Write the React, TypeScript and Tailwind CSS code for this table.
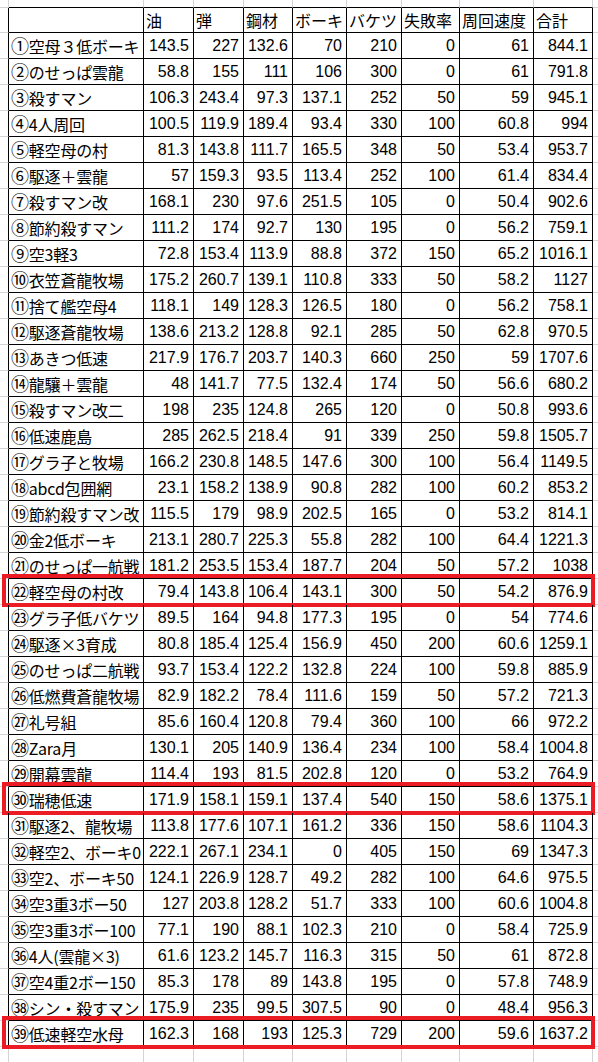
import React from "react";

type Row = [string, string, string, string, string, string, string, string, string];

const rows: Row[] = [
  ["①空母３低ボーキ", "143.5", "227", "132.6", "70", "210", "0", "61", "844.1"],
  ["②のせっぱ雲龍", "58.8", "155", "111", "106", "300", "0", "61", "791.8"],
  ["③殺すマン", "106.3", "243.4", "97.3", "137.1", "252", "50", "59", "945.1"],
  ["④4人周回", "100.5", "119.9", "189.4", "93.4", "330", "100", "60.8", "994"],
  ["⑤軽空母の村", "81.3", "143.8", "111.7", "165.5", "348", "50", "53.4", "953.7"],
  ["⑥駆逐＋雲龍", "57", "159.3", "93.5", "113.4", "252", "100", "61.4", "834.4"],
  ["⑦殺すマン改", "168.1", "230", "97.6", "251.5", "105", "0", "50.4", "902.6"],
  ["⑧節約殺すマン", "111.2", "174", "92.7", "130", "195", "0", "56.2", "759.1"],
  ["⑨空3軽3", "72.8", "153.4", "113.9", "88.8", "372", "150", "65.2", "1016.1"],
  ["⑩衣笠蒼龍牧場", "175.2", "260.7", "139.1", "110.8", "333", "50", "58.2", "1127"],
  ["⑪捨て艦空母4", "118.1", "149", "128.3", "126.5", "180", "0", "56.2", "758.1"],
  ["⑫駆逐蒼龍牧場", "138.6", "213.2", "128.8", "92.1", "285", "50", "62.8", "970.5"],
  ["⑬あきつ低速", "217.9", "176.7", "203.7", "140.3", "660", "250", "59", "1707.6"],
  ["⑭龍驤＋雲龍", "48", "141.7", "77.5", "132.4", "174", "50", "56.6", "680.2"],
  ["⑮殺すマン改二", "198", "235", "124.8", "265", "120", "0", "50.8", "993.6"],
  ["⑯低速鹿島", "285", "262.5", "218.4", "91", "339", "250", "59.8", "1505.7"],
  ["⑰グラ子と牧場", "166.2", "230.8", "148.5", "147.6", "300", "100", "56.4", "1149.5"],
  ["⑱abcd包囲網", "23.1", "158.2", "138.9", "90.8", "282", "100", "60.2", "853.2"],
  ["⑲節約殺すマン改", "115.5", "179", "98.9", "202.5", "165", "0", "53.2", "814.1"],
  ["⑳金2低ボーキ", "213.1", "280.7", "225.3", "55.8", "282", "100", "64.4", "1221.3"],
  ["㉑のせっぱ一航戦", "181.2", "253.5", "153.4", "187.7", "204", "50", "57.2", "1038"],
  ["㉒軽空母の村改", "79.4", "143.8", "106.4", "143.1", "300", "50", "54.2", "876.9"],
  ["㉓グラ子低バケツ", "89.5", "164", "94.8", "177.3", "195", "0", "54", "774.6"],
  ["㉔駆逐×3育成", "80.8", "185.4", "125.4", "156.9", "450", "200", "60.6", "1259.1"],
  ["㉕のせっぱ二航戦", "93.7", "153.4", "122.2", "132.8", "224", "100", "59.8", "885.9"],
  ["㉖低燃費蒼龍牧場", "82.9", "182.2", "78.4", "111.6", "159", "50", "57.2", "721.3"],
  ["㉗礼号組", "85.6", "160.4", "120.8", "79.4", "360", "100", "66", "972.2"],
  ["㉘Zara月", "130.1", "205", "140.9", "136.4", "234", "100", "58.4", "1004.8"],
  ["㉙開幕雲龍", "114.4", "193", "81.5", "202.8", "120", "0", "53.2", "764.9"],
  ["㉚瑞穂低速", "171.9", "158.1", "159.1", "137.4", "540", "150", "58.6", "1375.1"],
  ["㉛駆逐2、龍牧場", "113.8", "177.6", "107.1", "161.2", "336", "150", "58.6", "1104.3"],
  ["㉜軽空2、ボーキ0", "222.1", "267.1", "234.1", "0", "405", "150", "69", "1347.3"],
  ["㉝空2、ボーキ50", "124.1", "226.9", "128.7", "49.2", "282", "100", "64.6", "975.5"],
  ["㉞空3重3ボー50", "127", "203.8", "128.2", "51.7", "333", "100", "60.6", "1004.8"],
  ["㉟空3重3ボー100", "77.1", "190", "88.1", "102.3", "210", "0", "58.4", "725.9"],
  ["㊱4人(雲龍×3)", "61.6", "123.2", "145.7", "116.3", "315", "50", "61", "872.8"],
  ["㊲空4重2ボー150", "85.3", "178", "89", "143.8", "195", "0", "57.8", "748.9"],
  ["㊳シン・殺すマン", "175.9", "235", "99.5", "307.5", "90", "0", "48.4", "956.3"],
  ["㊴低速軽空水母", "162.3", "168", "193", "125.3", "729", "200", "59.6", "1637.2"],
];

const header = ["", "油", "弾", "鋼材", "ボーキ", "バケツ", "失敗率", "周回速度", "合計"];

// widths include the 1px right border
const cols = [
  "w-[135px]",
  "w-[50px]",
  "w-[50px]",
  "w-[49px]",
  "w-[54px]",
  "w-[55px]",
  "w-[58px]",
  "w-[74px]",
  "w-[59px]",
];

// rows that get the red box
const marked = [21, 29, 38];

const jp = "font-['Noto_Sans_CJK_JP',sans-serif]";
const num = "font-['Liberation_Sans','Noto_Sans_CJK_JP',sans-serif]";

const App = () => {
  return (
    <div className="w-[598px] h-[1062px] overflow-hidden bg-white text-black text-[16px]">
      {/* spreadsheet row above the table */}
      <div className="flex h-[8px]">
        <div className="w-[9px] shrink-0 border-r border-b border-[#d4d4d4]" />
        {cols.map((w, i) => (
          <div key={i} className={`${w} shrink-0 border-r border-r-[#d4d4d4] border-b border-b-black`} />
        ))}
        <div className="flex-1 border-b border-[#d4d4d4]" />
      </div>

      {/* header */}
      <div className="flex h-[25px] leading-[24px]">
        <div className="w-[9px] shrink-0 border-r border-r-black border-b border-b-[#d4d4d4]" />
        {header.map((h, i) => (
          <div
            key={i}
            className={`${cols[i]} shrink-0 border-r border-b border-black pl-[2px] whitespace-nowrap overflow-hidden ${jp}`}
          >
            {h}
          </div>
        ))}
        <div className="flex-1 border-b border-[#d4d4d4]" />
      </div>

      {rows.map((r, ri) => (
        <div key={ri} className="relative flex h-[26px] leading-[25px]">
          <div className="w-[9px] shrink-0 border-r border-r-black border-b border-b-[#d4d4d4]" />
          <div
            className={`${cols[0]} shrink-0 border-r border-b border-black pl-[2px] whitespace-nowrap overflow-hidden tracking-[-0.2px] ${jp}`}
          >
            <span className="text-[18px]">{r[0][0]}</span>
            {r[0].slice(1)}
          </div>
          {r.slice(1).map((v, ci) => (
            <div
              key={ci}
              className={`${cols[ci + 1]} shrink-0 border-r border-b border-black pr-[4px] text-right whitespace-nowrap ${num}`}
            >
              {v}
            </div>
          ))}
          <div className="flex-1 border-b border-[#d4d4d4]" />
          {marked.includes(ri) && (
            <div className="absolute left-[2px] right-[3px] -top-[5px] -bottom-[2px] border-4 border-[#ec1c24] pointer-events-none" />
          )}
        </div>
      ))}

      {/* spreadsheet area below the table */}
      <div className="flex h-[20px]">
        <div className="w-[9px] shrink-0 border-r border-[#d4d4d4]" />
        {cols.map((w, i) => (
          <div key={i} className={`${w} shrink-0 border-r border-[#d4d4d4]`} />
        ))}
        <div className="flex-1" />
      </div>
    </div>
  );
};

export default App;
